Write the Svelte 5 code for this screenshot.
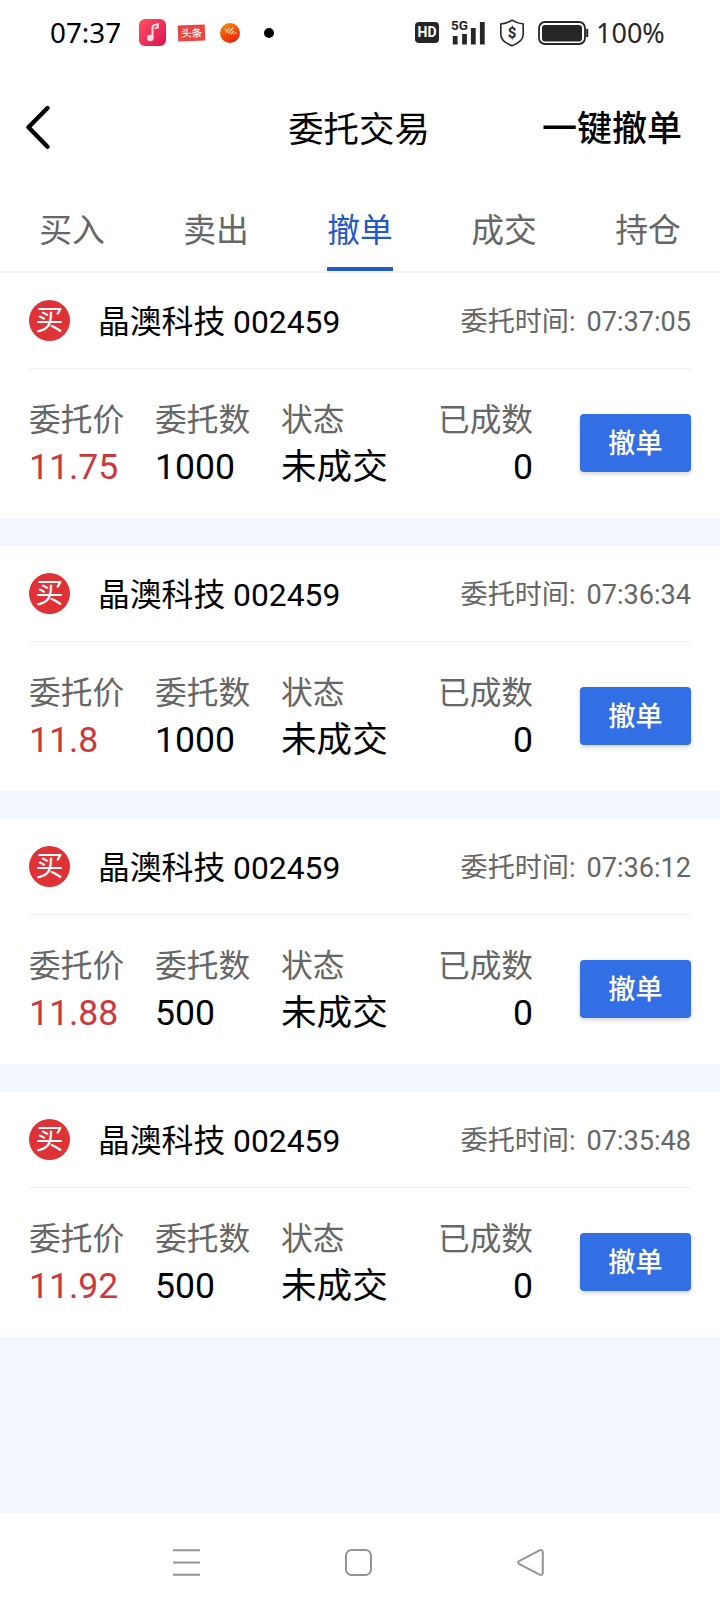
<script lang="ts">
    type Order = {
        time: string;
        price: string;
        amount: number;
    };

    const tabs = ["买入", "卖出", "撤单", "成交", "持仓"];
    let active = $state(2);

    const orders: Order[] = [
        { time: "07:37:05", price: "11.75", amount: 1000 },
        { time: "07:36:34", price: "11.8", amount: 1000 },
        { time: "07:36:12", price: "11.88", amount: 500 },
        { time: "07:35:48", price: "11.92", amount: 500 },
    ];
</script>

<div class="screen">
    <div class="status">
        <span class="clock">07:37</span>
        <svg class="music" width="27" height="27" viewBox="0 0 27 27">
            <defs>
                <linearGradient id="pink" x1="0" y1="0" x2="1" y2="1">
                    <stop offset="0" stop-color="#ff5261" />
                    <stop offset="1" stop-color="#db1250" />
                </linearGradient>
            </defs>
            <rect width="27" height="27" rx="6" fill="url(#pink)" />
            <circle cx="11.3" cy="19" r="3.3" fill="#ffdce2" />
            <path d="M13.5 19V8.5q0-2 2-2.4l3.4-.8v3.2l-3.2.8" fill="none" stroke="#ffdce2" stroke-width="2" />
        </svg>
        <span class="toutiao">头条</span>
        <svg class="wave" width="20" height="20" viewBox="0 0 20 20">
            <defs>
                <linearGradient id="flame" x1="0.2" y1="0" x2="0.7" y2="1">
                    <stop offset="0" stop-color="#f08a0c" />
                    <stop offset="1" stop-color="#ee1c0c" />
                </linearGradient>
            </defs>
            <circle cx="10" cy="10" r="10" fill="url(#flame)" />
            <path d="M5 6l1.4 1.4M6 9.4l3.6-4.2M8.4 10.2l3.4-4M10.8 11.2l3-3.6M11.8 4.8l1.2 1.2M13.4 11l1-1M15.6 9.6l1 1" stroke="#ffe9d0" stroke-width="1.1" />
        </svg>
        <span class="dot"></span>

        <span class="hd">HD</span>
        <div class="signal">
            <span class="net">5G</span>
            <svg width="34" height="24" viewBox="0 0 34 24">
                <path d="M4.2 15v8.5M13.5 13v10.5M22.3 7v16.5M31.3 1v22.5" stroke="#262626" stroke-width="4.8" />
            </svg>
        </div>
        <div class="shield">
            <svg width="26" height="28" viewBox="0 0 26 28">
                <path d="M13 1.2Q18 4.6 24.2 5v10.5q0 7-11.2 11.3Q1.8 22.5 1.8 15.5V5Q8 4.6 13 1.2z" fill="none" stroke="#262626" stroke-width="1.6" />
            </svg>
            <span>$</span>
        </div>
        <svg class="battery" width="51" height="24" viewBox="0 0 51 24">
            <rect x="1" y="1" width="46" height="22" rx="6" fill="none" stroke="#262626" stroke-width="1.8" />
            <rect x="4" y="4" width="40" height="16.5" rx="3" fill="#262626" />
            <path d="M49.2 8v8" stroke="#262626" stroke-width="2" />
        </svg>
        <span class="percent">100%</span>
    </div>

    <header>
        <button class="back" aria-label="返回">
            <svg width="26" height="46" viewBox="0 0 26 46">
                <path d="M22.5 3L3.5 22.2l19 19.5" fill="none" stroke="#000" stroke-width="4.4" stroke-linecap="round" stroke-linejoin="round" />
            </svg>
        </button>
        <h1>委托交易</h1>
        <button class="cancel-all">一键撤单</button>
    </header>

    <nav class="tabs">
        {#each tabs as tab, i}
            <button class:active={i === active} onclick={() => (active = i)}>
                <span>{tab}</span>
            </button>
        {/each}
    </nav>

    <main>
        {#each orders as order}
            <section class="order">
                <div class="top">
                    <span class="badge">买</span>
                    <span class="name">晶澳科技 002459</span>
                    <span class="time"><span>委托时间:</span><span>{order.time}</span></span>
                </div>
                <div class="details">
                    <dl>
                        <dt>委托价</dt>
                        <dd class="price">{order.price}</dd>
                    </dl>
                    <dl>
                        <dt>委托数</dt>
                        <dd>{order.amount}</dd>
                    </dl>
                    <dl>
                        <dt>状态</dt>
                        <dd>未成交</dd>
                    </dl>
                    <dl class="done">
                        <dt>已成数</dt>
                        <dd>0</dd>
                    </dl>
                    <button class="cancel">撤单</button>
                </div>
            </section>
        {/each}
    </main>

    <footer>
        <svg width="27" height="27" viewBox="0 0 27 27">
            <path d="M0 1.3h27M0 13.5h27M0 25.7h27" />
        </svg>
        <svg width="27" height="27" viewBox="0 0 27 27">
            <rect x="1" y="1" width="25" height="25" rx="5.5" />
        </svg>
        <svg width="27" height="27" viewBox="0 0 27 27">
            <path d="M2 12.2L22.5 1.4Q25.8 .3 25.8 3.5v20q0 3.2-3.3 2.1L2 14.8Q.2 13.5 2 12.2z" />
        </svg>
    </footer>
</div>

<style>
    :global(body) {
        margin: 0;
    }

    .screen {
        width: 720px;
        height: 1612px;
        display: flex;
        flex-direction: column;
        overflow: hidden;
        background: #fff;
        color: #000;
        font-family: Roboto, "Noto Sans CJK SC", sans-serif;
    }

    button {
        padding: 0;
        border: none;
        background: none;
        color: inherit;
        font-family: inherit;
    }

    svg {
        display: block;
        flex: none;
    }

    .status {
        height: 65px;
        box-sizing: border-box;
        padding-left: 50px;
        display: flex;
        align-items: center;
        white-space: nowrap;
        font-family: "Noto Sans", sans-serif;
    }
    .clock {
        width: 89px;
        padding-bottom: 2px;
        font-size: 27.8px;
    }
    .toutiao {
        width: 27px;
        height: 16px;
        margin: 0 15px 0 12px;
        background: #ee4440;
        color: #fff;
        font: 500 10.5px/16px "Noto Sans CJK SC", sans-serif;
        text-align: center;
        transform: rotate(-2deg);
    }
    .dot {
        width: 10px;
        height: 10px;
        margin: 0 141px 0 24px;
        border-radius: 50%;
        background: #000;
    }
    .hd {
        width: 24px;
        height: 21px;
        margin-right: 12px;
        border-radius: 4px;
        background: #262626;
        color: #fff;
        font: 700 14px/21px Roboto, sans-serif;
        text-align: center;
    }
    .signal {
        position: relative;
        margin-right: 14px;
    }
    .net {
        position: absolute;
        left: 0;
        top: -3px;
        padding-right: 1px;
        background: #fff;
        color: #262626;
        font: 700 13.5px/14px Roboto, sans-serif;
    }
    .shield {
        display: grid;
        place-items: center;
        margin-right: 13px;
        color: #262626;
        font: 700 15px/20px Roboto, sans-serif;
    }
    .shield > * {
        grid-area: 1 / 1;
    }
    .percent {
        margin-left: 7px;
        padding-bottom: 1px;
        color: #262626;
        font-size: 27px;
    }

    header {
        height: 126px;
        display: grid;
        grid-template-columns: 1fr auto 1fr;
        align-items: center;
        padding: 0 38px 0 25px;
    }
    h1 {
        margin: 0 0 0 11px;
        padding-top: 3px;
        font-size: 35.4px;
        line-height: 46px;
        font-weight: 400;
    }
    .back {
        width: 26px;
    }
    .cancel-all {
        justify-self: end;
        padding-top: 3px;
        font-size: 35px;
        line-height: 46px;
        font-weight: 500;
    }

    .tabs {
        height: 80px;
        display: flex;
        border-bottom: 2px solid #f3f3f3;
    }
    .tabs button {
        flex: 1;
        display: flex;
        justify-content: center;
        color: #666;
        font-size: 32.8px;
    }
    .tabs span {
        height: 76px;
        line-height: 81px;
        border-bottom: 4px solid transparent;
    }
    .tabs .active {
        color: #1f5ac8;
    }
    .tabs .active span {
        border-color: #235cc5;
    }

    main {
        flex: 1;
        display: flex;
        flex-direction: column;
        gap: 28px;
        background: #f2f6fe;
    }
    .order {
        height: 245px;
        box-sizing: border-box;
        padding: 0 29px;
        background: #fff;
    }
    .top {
        height: 95px;
        display: flex;
        align-items: center;
        border-bottom: 1px solid #f0f0f0;
    }
    .badge {
        width: 41px;
        height: 41px;
        margin-right: 28px;
        border-radius: 50%;
        background: #df3237;
        color: #fff;
        font-size: 28px;
        line-height: 42px;
        text-align: center;
    }
    .name {
        padding-top: 3px;
        font-size: 31.8px;
        line-height: 44px;
    }
    .time {
        margin-left: auto;
        padding-top: 3px;
        display: flex;
        align-items: baseline;
        gap: 11px;
        color: #666;
        font-size: 27.1px;
        line-height: 40px;
    }
    .details {
        height: 149px;
        display: flex;
        align-items: center;
    }
    dl {
        width: 126px;
        margin: 0;
        white-space: nowrap;
    }
    dt {
        padding-top: 2px;
        color: #666;
        font-size: 31.7px;
        line-height: 46px;
    }
    dd {
        margin: 0;
        padding-bottom: 1px;
        font-size: 35.6px;
        line-height: 47px;
    }
    .price {
        color: #cd383d;
    }
    .done {
        text-align: right;
    }
    .cancel {
        width: 111px;
        height: 58px;
        margin: 0 0 2px auto;
        border-radius: 4px;
        background: #326fe5;
        box-shadow: 0 2px 5px rgba(0, 0, 0, 0.18);
        color: #fff;
        font-size: 27.2px;
        line-height: 61px;
        font-weight: 500;
    }

    footer {
        height: 99px;
        display: flex;
        align-items: center;
        gap: 145px;
        padding-left: 173px;
    }
    footer svg {
        fill: none;
        stroke: #949494;
        stroke-width: 2;
    }
</style>
